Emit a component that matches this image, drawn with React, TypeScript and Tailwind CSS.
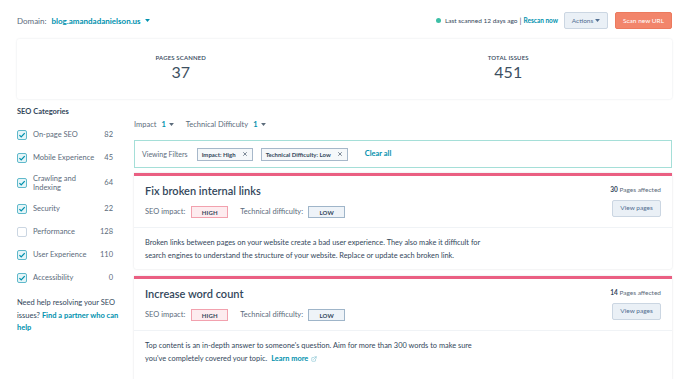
import { X, ExternalLink } from "lucide-react";

const categories = [
  { label: "On-page SEO", count: 82, checked: true },
  { label: "Mobile Experience", count: 45, checked: true },
  { label: "Crawling and Indexing", count: 64, checked: true },
  { label: "Security", count: 22, checked: true },
  { label: "Performance", count: 128, checked: false },
  { label: "User Experience", count: 110, checked: true },
  { label: "Accessibility", count: 0, checked: true },
];

function Caret({ className = "" }: { className?: string }) {
  return (
    <svg viewBox="0 0 8 5" className={"w-[5px] h-[3px] " + className}>
      <path d="M0 0h8L4 5z" fill="currentColor" />
    </svg>
  );
}

function Checkbox({ checked }: { checked: boolean }) {
  return (
    <span
      className={
        "flex items-center justify-center w-[10px] h-[10px] rounded-[2px] border shrink-0 " +
        (checked ? "border-[#5fb9cb] bg-[#e5f5f8]" : "border-[#cbd6e2] bg-white")
      }
    >
      {checked && (
        <svg viewBox="0 0 10 10" className="w-[8px] h-[8px]">
          <path d="M1.8 5.2l2.2 2.2 4.4-4.8" fill="none" stroke="#0091ae" strokeWidth="1.6" />
        </svg>
      )}
    </span>
  );
}

function Badge({ kind }: { kind: "HIGH" | "LOW" }) {
  return (
    <span
      className={
        "inline-flex items-center justify-center w-[37px] h-[12px] border text-[6px] font-bold tracking-wide " +
        (kind === "HIGH"
          ? "bg-[#fdecef] border-[#f2a1ae] text-[#33475b]"
          : "bg-[#eef3f8] border-[#9fb5c9] text-[#33475b]")
      }
    >
      {kind}
    </span>
  );
}

function IssueCard({
  title,
  pages,
  children,
}: {
  title: string;
  pages: number;
  children: React.ReactNode;
}) {
  return (
    <div className="bg-white border-t-[3px] border-[#ea5f82] shadow-[0_0_2px_rgba(45,62,80,0.18)] rounded-b-[2px]">
      <div className="flex justify-between px-[11px] pt-[8px] pb-[9px] border-b border-[#f0f3f6]">
        <div>
          <div className="text-[11px] font-semibold text-[#33475b] leading-[14px]">{title}</div>
          <div className="flex items-center mt-[8px] text-[7.5px] text-[#5b6b7b]">
            <span className="mr-[6px]">SEO impact:</span>
            <Badge kind="HIGH" />
            <span className="ml-[12px] mr-[5px]">Technical difficulty:</span>
            <Badge kind="LOW" />
          </div>
        </div>
        <div className="flex flex-col items-end pt-[1px]">
          <div className="text-[6.5px] text-[#5b6b7b]">
            <span className="font-bold text-[#33475b]">{pages}</span> Pages affected
          </div>
          <button className="mt-[5px] w-[49px] h-[17px] rounded-[2px] bg-[#eaf0f6] border border-[#cbd6e2] text-[6.5px] text-[#506e91]">
            View pages
          </button>
        </div>
      </div>
      <div className="px-[11px] pt-[8px] pb-[7px] text-[7.4px] leading-[13px] text-[#33475b]">{children}</div>
    </div>
  );
}

export default function App() {
  return (
    <div className="w-[685px] h-[379px] overflow-hidden bg-white text-[#33475b] font-['Lato','Liberation_Sans',sans-serif]">
      {/* Header */}
      <div className="flex items-center justify-between pl-[17px] pr-[13px] pt-[12px] h-[29px]">
        <div className="flex items-center text-[8px]">
          <span className="text-[#5b6b7b] mr-[5px]">Domain:</span>
          <span className="font-bold text-[#0091ae]">blog.amandadanielson.us</span>
          <Caret className="ml-[4px] text-[#0091ae]" />
        </div>
        <div className="flex items-center">
          <span className="w-[5px] h-[5px] rounded-full bg-[#3cbfa6] mr-[4px]" />
          <span className="text-[6.5px] text-[#33475b]">Last scanned 12 days ago</span>
          <span className="text-[8px] text-[#5b6b7b] mx-[2px]">|</span>
          <span className="text-[6.5px] font-bold text-[#0091ae]">Rescan now</span>
          <button className="ml-[6px] flex items-center justify-center w-[44px] h-[17px] rounded-[2px] bg-[#eaf0f6] border border-[#cbd6e2] text-[6.5px] text-[#506e91]">
            Actions
            <Caret className="ml-[2px] text-[#506e91]" />
          </button>
          <button className="ml-[7px] w-[57px] h-[17px] rounded-[2px] bg-[#f2856b] border border-[#ec7a5e] text-[6.5px] text-white">
            Scan new URL
          </button>
        </div>
      </div>

      {/* Stats */}
      <div className="ml-[17px] mr-[13px] mt-[10px] h-[60px] flex bg-white shadow-[0_0_2px_rgba(45,62,80,0.15)] rounded-[2px]">
        <div className="flex-1 flex flex-col items-center pt-[14px]">
          <div className="text-[6px] font-semibold tracking-wide text-[#33475b]">PAGES SCANNED</div>
          <div className="text-[16px] leading-[20px] text-[#3d4f61]">37</div>
        </div>
        <div className="flex-1 flex flex-col items-center pt-[14px]">
          <div className="text-[6px] font-semibold tracking-wide text-[#33475b]">TOTAL ISSUES</div>
          <div className="text-[16px] leading-[20px] text-[#3d4f61]">451</div>
        </div>
      </div>

      <div className="flex pl-[17px] pr-[13px] mt-[8px]">
        {/* Sidebar */}
        <div className="w-[100px] shrink-0">
          <div className="text-[7.5px] font-bold text-[#33475b] leading-[10px]">SEO Categories</div>
          <div className="mt-[6px] w-[96px] flex flex-col">
            {categories.map((c) => (
              <div key={c.label} className="flex items-center min-h-[23px] py-[5px] text-[7.5px] text-[#5b6b7b]">
                <Checkbox checked={c.checked} />
                <span className="ml-[6px] flex-1 leading-[9px] pr-[4px]">{c.label}</span>
                <span className="text-right">{c.count}</span>
              </div>
            ))}
          </div>
          <div className="mt-[8px] text-[7.5px] leading-[12.5px] text-[#33475b] whitespace-nowrap">
            <div>Need help resolving your SEO</div>
            <div>
              issues? <span className="font-bold text-[#0091ae]">Find a partner who can</span>
            </div>
            <div className="font-bold text-[#0091ae]">help</div>
          </div>
        </div>

        {/* Main */}
        <div className="flex-1 ml-[17px]">
          <div className="flex items-center h-[15px] mt-[10px] text-[7.5px] text-[#5b6b7b]">
            <span>Impact</span>
            <span className="ml-[5px] font-bold text-[#0091ae]">1</span>
            <Caret className="ml-[3px] text-[#5b6b7b]" />
            <span className="ml-[12px]">Technical Difficulty</span>
            <span className="ml-[5px] font-bold text-[#0091ae]">1</span>
            <Caret className="ml-[3px] text-[#5b6b7b]" />
          </div>

          <div className="mt-[8px] h-[28px] flex items-center px-[7px] border border-[#a5dfd8] text-[7px]">
            <span className="text-[#5b6b7b] mr-[9px]">Viewing Filters</span>
            <span className="flex items-center h-[13px] px-[4px] border border-[#a7b8ca] bg-[#f5f8fa] text-[6px] font-bold text-[#33475b]">
              Impact: High
              <X className="w-[6px] h-[6px] ml-[6px]" strokeWidth={2.5} />
            </span>
            <span className="ml-[8px] flex items-center h-[13px] px-[4px] border border-[#a7b8ca] bg-[#f5f8fa] text-[6px] font-bold text-[#33475b]">
              Technical Difficulty: Low
              <X className="w-[6px] h-[6px] ml-[6px]" strokeWidth={2.5} />
            </span>
            <span className="ml-[17px] font-bold text-[#0091ae] text-[7.5px]">Clear all</span>
          </div>

          <div className="mt-[5px] flex flex-col gap-[7px]">
            <IssueCard title="Fix broken internal links" pages={30}>
              Broken links between pages on your website create a bad user experience. They also make it difficult for
              <br />
              search engines to understand the structure of your website. Replace or update each broken link.
            </IssueCard>
            <IssueCard title="Increase word count" pages={14}>
              Top content is an in-depth answer to someone's question. Aim for more than 300 words to make sure
              <br />
              you've completely covered your topic.{" "}
              <span className="inline-flex items-center ml-[2px] font-bold text-[#0091ae]">
                Learn more
                <ExternalLink className="w-[6px] h-[6px] ml-[3px] text-[#6cb7c9]" strokeWidth={2} />
              </span>
              <br />
              <br />
            </IssueCard>
          </div>
        </div>
      </div>
    </div>
  );
}
